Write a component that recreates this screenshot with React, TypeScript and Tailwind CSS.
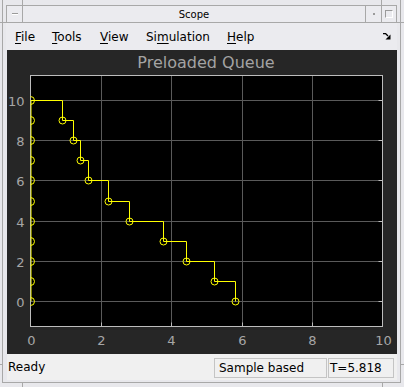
import React from 'react';

// pixel mapping of the axes (page coordinates)
const X0 = 30.5;
const XU = 35.2;
const Y0 = 301;
const YU = 20.1;
const px = (t: number) => Math.round(X0 + t * XU) + 0.5;
const py = (v: number) => Math.round(Y0 - v * YU) + 0.5;

const AX_L = 30.5;
const AX_R = 382.5;
const AX_T = 75.5;
const AX_B = 326.5;

// departure times of the queued entities
const steps = [0.9, 1.22, 1.42, 1.62, 2.2, 2.8, 3.77, 4.43, 5.2, 5.818];

const MenuItem: React.FC<{ pre: string; key_: string; post: string; w: string }> = ({ pre, key_, post, w }) => (
    <span className={`${w} shrink-0`}>
        {pre}
        <span className="underline underline-offset-[2px]">{key_}</span>
        {post}
    </span>
);

const Plot: React.FC = () => {
    // build the stair line
    let d = `M${AX_L} ${py(10)}`;
    let v = 10;
    steps.forEach((t) => {
        d += ` H${px(t)}`;
        v -= 1;
        d += ` V${py(v)}`;
    });

    const gridX = [2, 4, 6, 8];
    const gridY = [0, 2, 4, 6, 8, 10];
    const labelsX = [0, 2, 4, 6, 8, 10];

    return (
        <svg width="390" height="304" className="block">
            <defs>
                <clipPath id="axclip">
                    <rect x={AX_L} y={AX_T} width={AX_R - AX_L} height={AX_B - AX_T} />
                </clipPath>
            </defs>
            <g transform="translate(-7,-50)">
                <rect x="7" y="50" width="390" height="304" fill="#262626" />
                <text x="206" y="68" textAnchor="middle" fill="#a3a3a3" fontSize="16" fontFamily="DejaVu Sans, sans-serif">
                    Preloaded Queue
                </text>
                <rect x={AX_L} y={AX_T} width={AX_R - AX_L} height={AX_B - AX_T} fill="#000" />
                {/* grid */}
                {gridX.map((g) => (
                    <line key={`gx${g}`} x1={px(g)} x2={px(g)} y1={AX_T} y2={AX_B} stroke="#5a5a5a" strokeWidth="1" />
                ))}
                {gridY.map((g) => (
                    <line key={`gy${g}`} x1={AX_L} x2={AX_R} y1={py(g)} y2={py(g)} stroke="#5a5a5a" strokeWidth="1" />
                ))}
                {/* ticks */}
                {gridX.map((g) => (
                    <line key={`tx${g}`} x1={px(g)} x2={px(g)} y1={AX_B - 4} y2={AX_B} stroke="#bdbdbd" strokeWidth="1" />
                ))}
                {gridY.map((g) => (
                    <line key={`ty${g}`} x1={AX_R - 4} x2={AX_R} y1={py(g)} y2={py(g)} stroke="#bdbdbd" strokeWidth="1" />
                ))}
                <rect x={AX_L} y={AX_T} width={AX_R - AX_L} height={AX_B - AX_T} fill="none" stroke="#bdbdbd" strokeWidth="1" />

                {/* data */}
                <g clipPath="url(#axclip)" fill="none" stroke="#ffff00" strokeWidth="1">
                    <line x1={AX_L + 0.5} x2={AX_L + 0.5} y1={py(10)} y2={py(0)} />
                    {Array.from({ length: 11 }, (_, i) => (
                        <circle key={`l${i}`} cx={AX_L} cy={py(i)} r="4" />
                    ))}
                    <path d={d} />
                    {steps.map((t, i) => (
                        <circle key={`c${i}`} cx={px(t)} cy={py(9 - i)} r="3.5" />
                    ))}
                </g>

                {/* labels */}
                <g fill="#a6a6a6" fontSize="13" fontFamily="DejaVu Sans, sans-serif">
                    {gridY.map((g) => (
                        <text key={`ly${g}`} x="24.5" y={py(g) + 5} textAnchor="end">
                            {g}
                        </text>
                    ))}
                    {labelsX.map((g) => (
                        <text key={`lx${g}`} x={px(g)} y="345" textAnchor="middle">
                            {g}
                        </text>
                    ))}
                </g>
            </g>
        </svg>
    );
};

export default function App() {
    return (
        <div className="relative w-[404px] h-[387px] bg-[#e8e8ec] pl-[2px] pr-[3px] font-['DejaVu_Sans',sans-serif] text-black overflow-hidden">
            {/* resize corner marks */}
            <div className="absolute left-[22px] top-0 w-px h-[5px] bg-[#a8a8a8]" />
            <div className="absolute left-[381px] top-0 w-px h-[5px] bg-[#a8a8a8]" />
            <div className="absolute left-0 top-[22px] w-[6px] h-px bg-[#a8a8a8]" />
            <div className="absolute right-0 top-[22px] w-[7px] h-px bg-[#a8a8a8]" />
            <div className="absolute left-0 top-[364px] w-[2px] h-px bg-[#a8a8a8]" />
            <div className="absolute right-0 top-[364px] w-[3px] h-px bg-[#a8a8a8]" />
            <div className="absolute left-[22px] top-[383px] w-px h-[4px] bg-[#a8a8a8]" />
            <div className="absolute left-[382px] top-[383px] w-px h-[4px] bg-[#a8a8a8]" />

            <div className="h-[383px] border-l border-r border-b border-[#a8a8a8] px-[3px] pt-[5px] flex flex-col">
                {/* TITLE BAR */}
                <div className="h-[18px] border border-[#a8a8a8] flex items-stretch bg-[#ebebef]">
                    <div className="w-[16px] border-r border-[#a8a8a8] flex items-center justify-center">
                        <div className="w-[6px] h-[2px] border-t border-[#9a9a9a] border-b border-b-white" />
                    </div>
                    <div className="flex-1 flex items-center justify-center text-[10px] leading-none pt-[1px]">Scope</div>
                    <div className="w-[16px] border-l border-[#a8a8a8] flex items-center justify-center">
                        <div className="w-[2px] h-[2px] bg-[#9a9a9a]" />
                    </div>
                    <div className="w-[15px] border-l border-[#a8a8a8] flex items-center justify-center">
                        <div className="w-[8px] h-[8px] border border-[#9a9a9a] border-r-white border-b-white" />
                    </div>
                </div>

                {/* MENU BAR */}
                <div className="h-[27px] flex items-center text-[12px] leading-none bg-[#ebebef] pl-[9px] pr-[6px]">
                    <MenuItem pre="" key_="F" post="ile" w="w-[37px]" />
                    <MenuItem pre="" key_="T" post="ools" w="w-[48px]" />
                    <MenuItem pre="" key_="V" post="iew" w="w-[46px]" />
                    <MenuItem pre="Si" key_="m" post="ulation" w="w-[81px]" />
                    <MenuItem pre="" key_="H" post="elp" w="w-[40px]" />
                    <div className="flex-1" />
                    <svg width="8" height="7" viewBox="0 0 8 7" className="mb-[1px]">
                        <path d="M0 0.5 H2.5 L5 3" stroke="#000" strokeWidth="1.3" fill="none" />
                        <polygon points="7.5,1.5 7.5,6.5 2.5,6.5" fill="#000" />
                    </svg>
                </div>

                {/* SCOPE FIGURE */}
                <div className="ml-[1px] h-[304px]">
                    <Plot />
                </div>

                {/* STATUS BAR */}
                <div className="ml-[1px] h-[26px] bg-[#f0f0f0] flex items-center text-[12px] leading-none">
                    <span className="pl-[1px] flex-1">Ready</span>
                    <div className="w-[113px] h-[20px] border border-[#c4c4c4] flex items-center pl-[4px] mt-[1px]">Sample based</div>
                    <div className="ml-[1px] w-[66px] h-[20px] border border-[#c4c4c4] flex items-center pl-[1px] mt-[1px]">T=5.818</div>
                    <div className="w-[3px]" />
                </div>
            </div>
        </div>
    );
}
